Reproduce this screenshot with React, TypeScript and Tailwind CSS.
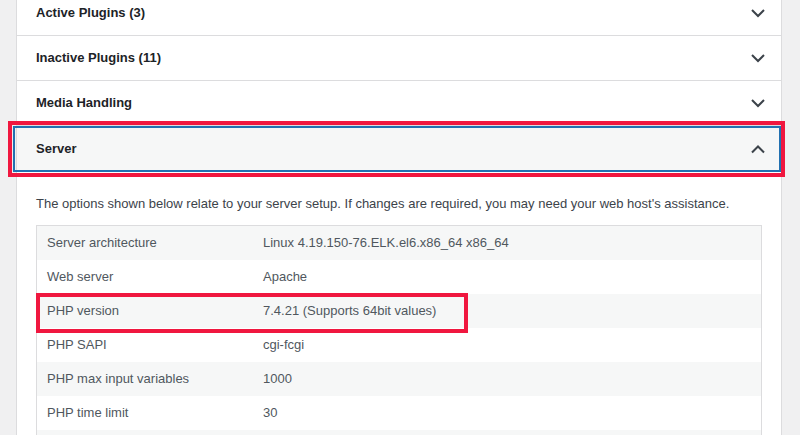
const sections = ['Active Plugins (3)', 'Inactive Plugins (11)', 'Media Handling']

const rows: [string, string][] = [
  ['Server architecture', 'Linux 4.19.150-76.ELK.el6.x86_64 x86_64'],
  ['Web server', 'Apache'],
  ['PHP version', '7.4.21 (Supports 64bit values)'],
  ['PHP SAPI', 'cgi-fcgi'],
  ['PHP max input variables', '1000'],
  ['PHP time limit', '30'],
]

function Chevron({ up = false }: { up?: boolean }) {
  return (
    <svg width="20" height="20" viewBox="0 0 20 20" fill="none" className="shrink-0">
      <path
        d={up ? 'M4 13.5l6-6 6 6' : 'M4 7l6 6 6-6'}
        stroke="#3c434a"
        strokeWidth="2"
      />
    </svg>
  )
}

export default function App() {
  return (
    <div className="h-[435px] overflow-hidden bg-[#f0f0f1] pl-4 pr-[18px] font-['Liberation_Sans',Arial,sans-serif] text-[13px]">
      <div className="-mt-[9px] bg-white border-x border-[#dcdcde]">
        {sections.map((s) => (
          <div
            key={s}
            className="h-[45px] flex items-center justify-between pl-[19px] pr-[13px] border-b border-[#dcdcde]"
          >
            <span className="font-bold text-[#1d2327]">{s}</span>
            <Chevron />
          </div>
        ))}

        <div className="relative h-[45px] flex items-center justify-between pl-[19px] pr-[13px] bg-[#f6f7f7]">
          <span className="font-bold text-[#1d2327]">Server</span>
          <Chevron up />
          <div className="absolute -left-[4px] right-0 top-0 -bottom-[1px] border-2 border-[#2271b1]" />
          <div className="absolute -left-[9px] -right-[4px] -top-[5px] -bottom-[6px] border-4 border-[#f0173f]" />
        </div>

        <div className="pl-[19px] pr-[19px] pt-[24px]">
          <p className="leading-[18px] text-[#3c434a]">
            The options shown below relate to your server setup. If changes are required, you may need your web host's assistance.
          </p>
          <div className="mt-[12px] border border-[#dcdcde] text-[#50575e]">
            {rows.map(([label, value], i) => (
              <div
                key={label}
                className={`relative grid grid-cols-[216px_1fr] h-[34px] items-center ${
                  i % 2 === 0 ? 'bg-[#f6f7f7]' : 'bg-white'
                }`}
              >
                <div className="px-[10px]">{label}</div>
                <div className="px-[10px]">{value}</div>
                {label === 'PHP version' && (
                  <div className="absolute z-10 -left-[1px] -top-[1px] -bottom-[5px] w-[432px] border-4 border-[#f0173f]" />
                )}
              </div>
            ))}
            <div className="h-[34px] bg-[#f6f7f7]" />
          </div>
        </div>
      </div>
    </div>
  )
}
